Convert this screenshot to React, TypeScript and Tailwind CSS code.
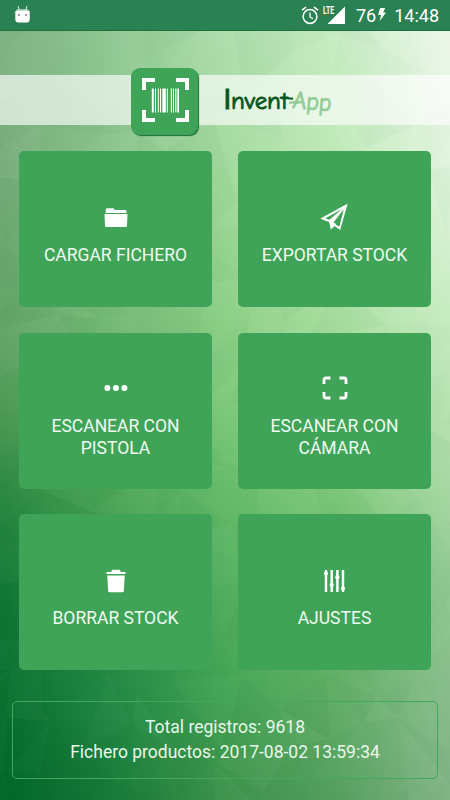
import type { ReactNode } from "react";

// Background colours, sampled on a loose grid: y position, then five stops from left to right
const ROWS: [number, string[]][] = [
  [30, ["7fb183", "90c893", "aedeac", "c9edc4", "edf7eb"]],
  [150, ["78ad7b", "8ac48b", "a6dba0", "c0eab9", "e4f5e1"]],
  [320, ["62a467", "76bb77", "8ccf86", "a9df9f", "c9edc3"]],
  [410, ["4f9b57", "62ad67", "7cc87a", "97d68e", "b8e2b2"]],
  [500, ["28873f", "4aa456", "64ba69", "7cc878", "a8d8a4"]],
  [600, ["0f7635", "2f934a", "50ad5c", "66b669", "90c792"]],
  [690, ["08702f", "238945", "44a556", "62af67", "8dc08f"]],
  [800, ["006629", "197a39", "3b9149", "57a060", "82b386"]],
];

function channel(hex: string, i: number) {
  return parseInt(hex.slice(i * 2, i * 2 + 2), 16);
}

function colorAt(x: number, y: number) {
  const cy = Math.min(799, Math.max(30, y));
  const cx = Math.min(449, Math.max(0, x)) / 112.5;
  const r = ROWS.findIndex(([top], i) => i < ROWS.length - 1 && cy >= top && cy < ROWS[i + 1][0]);
  const t = (cy - ROWS[r][0]) / (ROWS[r + 1][0] - ROWS[r][0]);
  const c = Math.floor(cx);
  const u = cx - c;
  const rgb = [0, 1, 2].map((i) => {
    const a = channel(ROWS[r][1][c], i) * (1 - u) + channel(ROWS[r][1][c + 1], i) * u;
    const b = channel(ROWS[r + 1][1][c], i) * (1 - u) + channel(ROWS[r + 1][1][c + 1], i) * u;
    return Math.round(a * (1 - t) + b * t);
  });
  return `rgb(${rgb.join(",")})`;
}

function noise(a: number, b: number) {
  const n = Math.sin(a * 127.1 + b * 311.7) * 43758.5453;
  return n - Math.floor(n);
}

function Background() {
  const cells: ReactNode[] = [];
  for (let y = -20; y < 820; y += 10) {
    for (let x = -20; x < 470; x += 10) {
      cells.push(<rect key={`${x}-${y}`} x={x} y={y} width="10.5" height="10.5" fill={colorAt(x + 5, y + 5)} />);
    }
  }

  const size = 46;
  const point = (i: number, j: number) => [
    (i + (noise(i, j) - 0.5) * 0.9) * size,
    (j + (noise(j + 9, i + 4) - 0.5) * 0.9) * size,
  ];
  const facets: ReactNode[] = [];
  for (let j = -1; j < 19; j++) {
    for (let i = -1; i < 11; i++) {
      const a = point(i, j);
      const b = point(i + 1, j);
      const c = point(i, j + 1);
      const d = point(i + 1, j + 1);
      const tris = noise(i, j + 50) > 0.5 ? [[a, b, c], [b, c, d]] : [[a, b, d], [a, c, d]];
      tris.forEach((tri, k) => {
        const n = noise(i + k * 31, j + 17);
        facets.push(
          <polygon
            key={`${i}-${j}-${k}`}
            points={tri.map((p) => p.join(",")).join(" ")}
            fill={n > 0.5 ? "#fff" : "#004020"}
            opacity={Math.abs(n - 0.5) * 0.06}
          />
        );
      });
    }
  }

  return (
    <svg className="absolute inset-0 h-full w-full" viewBox="0 0 450 800">
      <defs>
        <filter id="soften" x="0" y="0" width="100%" height="100%" colorInterpolationFilters="sRGB">
          <feGaussianBlur stdDeviation="6" />
        </filter>
      </defs>
      <g filter="url(#soften)">{cells}</g>
      {facets}
    </svg>
  );
}

function StatusBar() {
  return (
    <header className="relative flex h-[30px] items-center bg-[#2a8153] pl-[15px] pr-[11px] text-white shadow-[0_1px_0_#1c7042]">
      <svg className="h-[18px] w-[15px] -translate-y-px" viewBox="0 0 15 18">
        <path d="M3 1l1.2 4M12 1l-1.2 4" stroke="#d9eee0" strokeWidth="1" />
        <path d="M2 4.2h11l1 2H1z" fill="#c0dfc9" />
        <path d="M.3 6h14.4v8.2q0 3.3-3 3.3H3.3q-3 0-3-3.3z" fill="#fff" />
        <path d="M3 9h2v2H3zM10 9h2v2h-2z" fill="#9ba8a0" />
      </svg>
      <div className="ml-auto flex items-center">
        <svg className="h-[19px] w-[18px]" viewBox="0 0 18 19" fill="none" stroke="#fff">
          <circle cx="9" cy="10.5" r="6.9" strokeWidth="1.5" />
          <path d="M9 6.5v4.5l3 1.8" strokeWidth="1.3" />
          <path d="M1 4.2l4-3.1M17 4.2l-4-3.1" strokeWidth="1.6" />
        </svg>
        <svg className="ml-[4px] h-[20px] w-[23px]" viewBox="0 0 23 20">
          <text x="0" y="9" fill="#fff" fontFamily="Roboto, sans-serif" fontSize="10.5" fontWeight="700" textLength="11" lengthAdjust="spacingAndGlyphs">LTE</text>
          <path d="M22 1.5V19H4.5z" fill="#fff" />
        </svg>
        <span className="ml-[10px] w-[20px] translate-y-px text-[18px] leading-[30px]">76</span>
        <svg className="ml-[2px] h-[13px] w-[8px] -translate-y-px" viewBox="0 0 8 13" fill="#fff">
          <path d="M2.2 0h5L5.1 4.6H8L1.7 13 3 7H0z" />
        </svg>
        <span className="ml-[9px] flex w-[44px] translate-y-px justify-end text-[18px] leading-[30px] whitespace-nowrap">14:48</span>
      </div>
    </header>
  );
}

const BARS = [
  [20, 2], [23.2, 1], [26, 1], [28.2, 1], [30.5, 3.5], [35, 1], [39, 1.2], [41.2, 1], [43.5, 1.1], [45.5, 1.7],
];

function Brand() {
  return (
    <div className="relative mt-[45px] flex h-[50px] items-center bg-white/65 pl-[131px]">
      <div className="h-[67px] w-[67px] shrink-0 translate-y-[1px] rounded-[9px] bg-[#3fa458] shadow-[1px_1px_1px_#176c35]">
        <svg className="h-full w-full" viewBox="0 0 67 67">
          <path
            d="M13 22V12h11M45 12h11v10M13 42v10h11M45 52h11V42"
            fill="none"
            stroke="#fff"
            strokeWidth="4"
          />
          {BARS.map(([x, w]) => (
            <rect key={x} x={x + 0.8} y="20.5" width={w} height="24" fill="#fff" />
          ))}
        </svg>
      </div>
      <svg className="ml-[24px] h-[44px] w-[116px]" viewBox="0 0 116 44" fontFamily="'Comic Neue', 'Comic Sans MS', Lato, sans-serif">
        <g fill="#07571f" stroke="#07571f">
          <text y="31" strokeWidth=".9" fontSize="25">
            <tspan x="1.5" fontFamily="Roboto, sans-serif" fontSize="28">I</tspan>
            <tspan x="9" textLength="57" lengthAdjust="spacingAndGlyphs">nvent</tspan>
          </text>
          <path d="M60 20.6q6-.6 11 .2" fill="none" strokeWidth="2" />
        </g>
        <g fill="#95cc99" stroke="#95cc99">
          <text x="70" y="30" strokeWidth="1" fontSize="25" textLength="39" lengthAdjust="spacingAndGlyphs" transform="rotate(5 70 30)">App</text>
          <path d="M67 25l8-1.500" fill="none" strokeWidth="2" />
        </g>
      </svg>
    </div>
  );
}

function Tile({ label, children }: { label: string; children: ReactNode }) {
  return (
    <button className="flex h-[156px] flex-col items-center justify-center rounded-[5px] bg-[#3fa458] px-5 text-[#effaf0]">
      <span className="flex h-[51px] items-center justify-center">{children}</span>
      <span className="translate-y-px text-[17.5px] leading-[22.5px]">{label}</span>
    </button>
  );
}

function App() {
  return (
    <div className="relative h-[800px] w-[450px] overflow-hidden font-['Roboto',sans-serif]">
      <Background />
      <StatusBar />
      <Brand />
      <main className="relative mt-[26px] grid grid-cols-2 gap-x-[26px] gap-y-[25.5px] px-[19px]">
        <Tile label="CARGAR FICHERO">
          <svg className="h-[21px] w-[24px]" viewBox="0 0 24 21" fill="#fff">
            <path d="M1.7 6V2.8q0-1.5 1.5-1.5H9q1.2 0 1.7 1.7H21q1.4 0 1.4 1.4V6z" />
            <path d="M.5 7h23l-.5 11.5q-.1 1.5-1.3 1.5H2.3Q1.1 20 1 18.5z" />
          </svg>
        </Tile>
        <Tile label="EXPORTAR STOCK">
          <svg className="h-[27px] w-[27px]" viewBox="0 0 27 27">
            <path d="M25 1.7L1.8 14.5l6 2.2 10.8 7.6z" fill="none" stroke="#fff" strokeWidth="2" />
            <path d="M25 1.7L7.8 16.3l2 9.3 4.5-4.2z" fill="#fff" />
            <path d="M22 6l-9.500 12.500 6 3.500z" fill="#3fa458" />
          </svg>
        </Tile>
        <Tile label="ESCANEAR CON PISTOLA">
          <svg className="h-[8px] w-[24px]" viewBox="0 0 24 8" fill="#fff">
            <circle cx="3.4" cy="4" r="3" />
            <circle cx="11.9" cy="4" r="3" />
            <circle cx="20.4" cy="4" r="3" />
          </svg>
        </Tile>
        <Tile label="ESCANEAR CON CÁMARA">
          <svg className="h-[24px] w-[26px]" viewBox="0 0 26 24" fill="none" stroke="#fff" strokeWidth="2.8">
            <path d="M2 8V4q0-2 2-2h4.5M17.5 2H22q2 0 2 2v4M2 16v4q0 2 2 2h4.5M17.5 22H22q2 0 2-2v-4" />
          </svg>
        </Tile>
        <Tile label="BORRAR STOCK">
          <svg className="h-[24px] w-[20px]" viewBox="0 0 20 24" fill="#fff">
            <path d="M.5 5V3H5L6.3.8h7.4L15 3h4.500v2z" />
            <path d="M1.2 6.500h17.600l-1 15.500q-.1 1.3-1.4 1.3H3.600q-1.3 0-1.4-1.3z" />
          </svg>
        </Tile>
        <Tile label="AJUSTES">
          <svg className="h-[24px] w-[22px]" viewBox="0 0 22 24" fill="#fff">
            <path d="M.8 1h2.400v22H.8zM6.500 1h2.400v22H6.500zM12.200 1h2.400v22h-2.400zM17.800 1h2.400v22h-2.400z" />
            <circle cx="2" cy="4.5" r="2.1" />
            <circle cx="7.7" cy="15.8" r="2.1" />
            <circle cx="13.4" cy="8.3" r="2.1" />
            <circle cx="19" cy="19.5" r="2.1" />
          </svg>
        </Tile>
      </main>
      <footer className="relative mx-[12px] mt-[31px] flex h-[78px] flex-col items-center justify-center rounded-[5px] border border-[#44a75c] text-[17.5px] leading-[25px] text-[#e9f7ea]">
        <p>Total registros: 9618</p>
        <p>Fichero productos: 2017-08-02 13:59:34</p>
      </footer>
    </div>
  );
}

export default App;
